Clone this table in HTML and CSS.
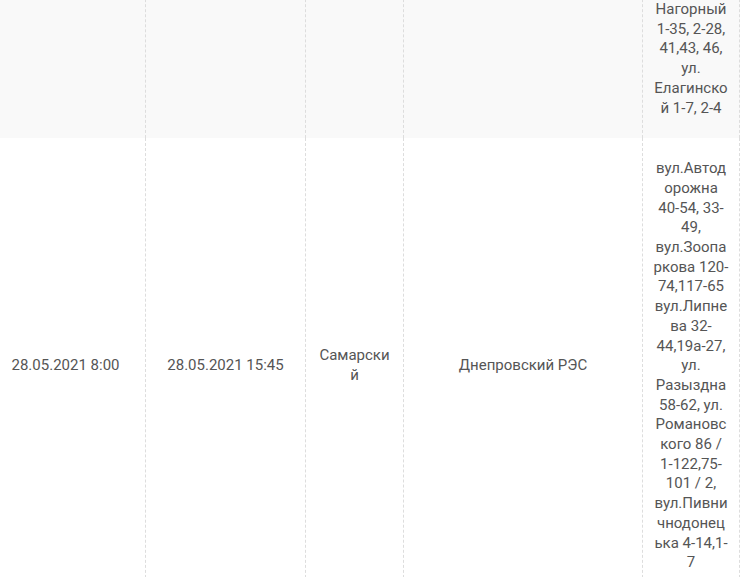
FILE: index.html
```html
<!DOCTYPE html>
<html lang="ru">
<head>
<meta charset="utf-8">
<title>Отключения</title>
<link rel="stylesheet" href="styles.css">
</head>
<body>
<div class="viewport">
  <table class="outages">
    <colgroup>
      <col class="c-start">
      <col class="c-end">
      <col class="c-district">
      <col class="c-res">
      <col class="c-streets">
    </colgroup>
    <tbody>
      <tr class="row-alt">
        <td></td>
        <td></td>
        <td></td>
        <td></td>
        <td>Нагорный 1-35, 2-28, 41,43, 46, ул. Елагинской 1-7, 2-4</td>
      </tr>
      <tr>
        <td>28.05.2021 8:00</td>
        <td>28.05.2021 15:45</td>
        <td>Самарский</td>
        <td>Днепровский РЭС</td>
        <td>вул.Автодорожна 40-54, 33-49, вул.Зоопаркова 120-74,117-65 вул.Липнева 32-44,19а-27, ул. Разыздна 58-62, ул. Романовского 86 / 1-122,75-101 / 2, вул.Пивничнодонецька 4-14,1-7</td>
      </tr>
    </tbody>
  </table>
</div>
</body>
</html>
```

FILE: styles.css
```css
html, body {
  margin: 0;
  padding: 0;
  background: #ffffff;
}

.viewport {
  width: 740px;
  height: 577px;
  overflow: hidden;
}

.outages {
  margin-top: -21px;
  margin-left: -15px;
  width: 755px;
  table-layout: fixed;
  border-collapse: separate;
  border-spacing: 0;
  font-family: Roboto, "Liberation Sans", sans-serif;
  font-size: 15px;
  line-height: 19.7px;
  color: #555555;
}

.c-start { width: 161px; }
.c-end { width: 160px; }
.c-district { width: 98px; }
.c-res { width: 239px; }
.c-streets { width: 97px; }

.outages td {
  padding: 21px 10px 20px;
  text-align: center;
  vertical-align: middle;
  border-right: 1px dashed #dddddd;
  overflow-wrap: break-word;
  word-wrap: break-word;
}

.outages td:first-child {
  border-left: 1px dashed #dddddd;
}

.row-alt td {
  background: #f9f9f9;
}
```
